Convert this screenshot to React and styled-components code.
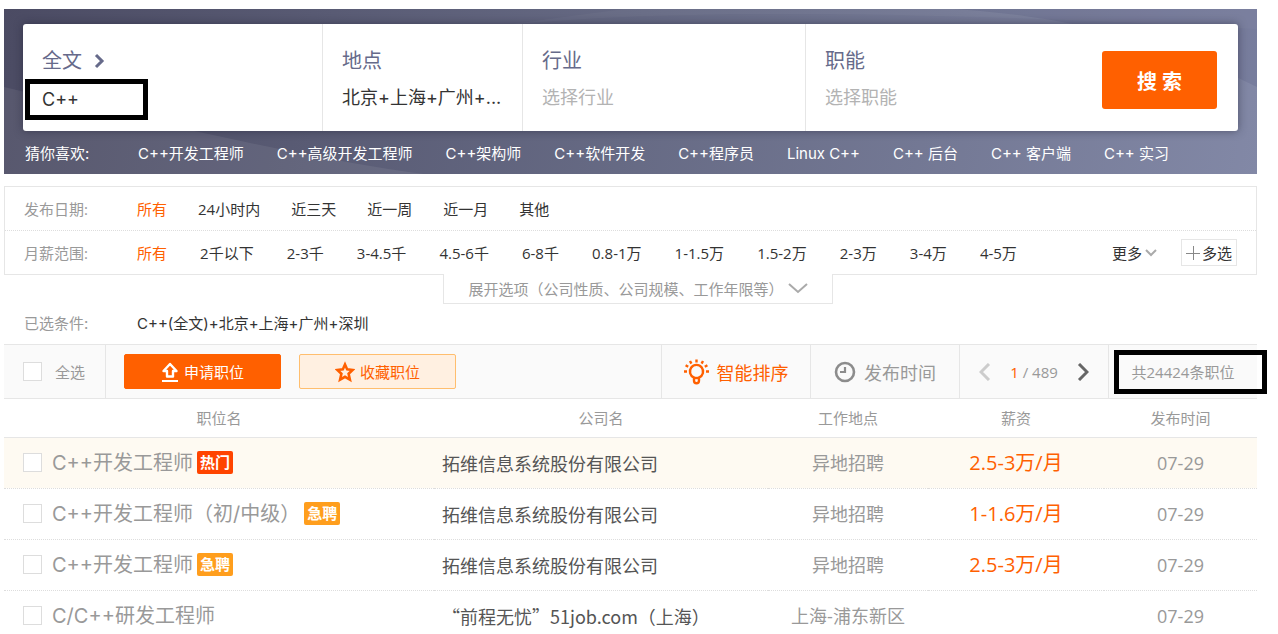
import React from "react";
import styled, { createGlobalStyle } from "styled-components";

const GlobalStyle = createGlobalStyle`
  * {
    box-sizing: border-box;
  }

  body {
    margin: 0;
    background: #fff;
    color: #333;
    font-family: "Open Sans", "Noto Sans CJK SC", sans-serif;
    font-size: 15px;
    line-height: 20px;
  }

  button,
  input {
    font-family: inherit;
    font-size: inherit;
    color: inherit;
    margin: 0;
  }

  button {
    padding: 0;
    border: 0;
    background: none;
    cursor: pointer;
  }

  a {
    color: inherit;
    text-decoration: none;
    white-space: nowrap;
  }
`;

const titleFont = `"Inter", "Noto Sans CJK SC", sans-serif`;

const Page = styled.main`
  padding: 9px 21px 0 4px;
`;

const Banner = styled.header`
  position: relative;
  padding: 15px 19px 0 19px;
  background: linear-gradient(100deg, #4b4b63 0%, #666a84 50%, #8288a6 100%);
`;

const BannerArt = styled.svg`
  position: absolute;
  top: 0;
  left: 0;
  width: 100%;
  height: 100%;
`;

const SearchCard = styled.form`
  position: relative;
  display: flex;
  height: 107px;
  border-radius: 3px;
  background: #fff;
  box-shadow: 0 0 8px rgba(30, 30, 50, 0.5);
`;

const SearchField = styled.div`
  flex: 1 1 ${(props) => props.$basis}px;
  min-width: 0;
  padding: 25px 19px 0;
  border-right: ${(props) => (props.$last ? "0" : "1px solid #e6e6e6")};
`;

const FieldTitle = styled.label`
  display: flex;
  align-items: center;
  gap: 12px;
  height: 24px;
  color: #666a8a;
  font-size: 20px;
  line-height: 24px;
`;

const FieldValue = styled.button`
  display: block;
  margin-top: 13px;
  color: ${(props) => (props.$empty ? "#b3b3b3" : "#333")};
  font-family: ${titleFont};
  font-size: 18px;
  line-height: 24px;
  white-space: nowrap;
`;

const KeywordInput = styled.input`
  display: block;
  width: 123px;
  height: 41px;
  margin: 6px 0 0 -17px;
  padding: 0 12px;
  border: 5px solid #000;
  background: #fff;
  font-family: ${titleFont};
  font-size: 18px;
  outline: 0;
`;

const SearchButton = styled.button`
  flex: none;
  width: 115px;
  height: 58px;
  margin: 27px 21px 0 0;
  border-radius: 3px;
  background: #ff6000;
  color: #fff;
  font-size: 20px;
  font-weight: 700;
`;

const Suggestions = styled.nav`
  position: relative;
  display: flex;
  height: 43px;
  padding: 2px 69px 0 2px;
  align-items: center;
  color: #fff;
  font-family: ${titleFont};
`;

const SuggestLabel = styled.span`
  flex: none;
  width: 113px;
`;

const SuggestLinks = styled.div`
  flex: 1;
  display: flex;
  justify-content: space-between;
`;

const Filters = styled.section`
  margin-top: 12px;
  border: 1px solid #e6e6e6;
`;

const FilterRow = styled.div`
  display: flex;
  align-items: center;
  height: 43px;
  padding: 0 19px;

  & + & {
    height: 44px;
    border-top: 1px dotted #ddd;
  }
`;

const FilterLabel = styled.span`
  flex: none;
  width: 113px;
  color: #999;
`;

const FilterOptions = styled.div`
  display: flex;
  flex: ${(props) => (props.$spread ? "1" : "none")};
  justify-content: space-between;
  gap: ${(props) => (props.$spread ? "0" : "31px")};
`;

const Option = styled.a`
  color: ${(props) => (props.$active ? "#ff6000" : "#333")};
`;

const MoreButton = styled.button`
  display: flex;
  align-items: center;
  gap: 3px;
  margin-left: 95px;
  white-space: nowrap;
`;

const MultiButton = styled.button`
  display: flex;
  align-items: center;
  justify-content: center;
  gap: 2px;
  width: 56px;
  height: 27px;
  margin-left: 24px;
  border: 1px solid #e6e6e6;
  white-space: nowrap;
`;

const ExpandButton = styled.button`
  display: flex;
  align-items: center;
  justify-content: center;
  gap: 4px;
  width: 390px;
  height: 30px;
  margin: -1px auto 0 439px;
  border: 1px solid #e6e6e6;
  border-top: 0;
  background: #fff;
  color: #999;
`;

const Selected = styled.div`
  display: flex;
  align-items: center;
  height: 40px;
  padding: 0 20px;
  font-family: ${titleFont};
`;

const Toolbar = styled.div`
  display: flex;
  height: 55px;
  border-top: 1px solid #e6e6e6;
  border-bottom: 1px solid #e6e6e6;
  background: #fafafa;
  color: #999;
`;

const CheckAll = styled.label`
  display: flex;
  align-items: center;
  gap: 13px;
  width: 102px;
  padding-left: 19px;
  border-right: 1px solid #e6e6e6;
`;

const Checkbox = styled.input.attrs({ type: "checkbox" })`
  appearance: none;
  flex: none;
  width: 19px;
  height: 19px;
  border: 1px solid #ddd;
  background: #fff;

  &:checked {
    background: #ff6000;
  }
`;

const Actions = styled.div`
  display: flex;
  flex: 1;
  align-items: center;
  gap: 18px;
  padding-left: 18px;
`;

const ActionButton = styled.button`
  display: flex;
  align-items: center;
  justify-content: center;
  gap: 5px;
  width: 157px;
  height: 35px;
  border: 1px solid ${(props) => (props.$primary ? "#ff6000" : "#ffbe6e")};
  border-radius: 2px;
  background: ${(props) => (props.$primary ? "#ff6000" : "#fff0e1")};
  color: ${(props) => (props.$primary ? "#fff" : "#ff6000")};
`;

const SortButton = styled.button`
  display: flex;
  align-items: center;
  justify-content: center;
  gap: 8px;
  width: 149px;
  border-left: 1px solid #e6e6e6;
  color: ${(props) => (props.$active ? "#ff6000" : "#999")};
  font-size: 18px;
`;

const Pager = styled.div`
  display: flex;
  align-items: center;
  justify-content: center;
  gap: 19px;
  width: 149px;
  border-left: 1px solid #e6e6e6;
  white-space: pre;

  button {
    display: flex;
  }

  b {
    color: #ff6000;
    font-weight: 400;
  }
`;

const Total = styled.div`
  position: relative;
  display: flex;
  align-items: center;
  justify-content: center;
  width: 149px;
  border-left: 1px solid #e6e6e6;

  &::after {
    content: "";
    position: absolute;
    top: 5px;
    right: -10px;
    bottom: 4px;
    left: 5px;
    border: 5px solid #000;
  }
`;

const JobTable = styled.table`
  width: 100%;
  border-collapse: collapse;
  table-layout: fixed;
`;

const HeadCell = styled.th`
  width: ${(props) => (props.$width ? `${props.$width}px` : "auto")};
  height: 38px;
  padding: 0;
  border-bottom: 1px solid #e6e6e6;
  color: #999;
  font-weight: 400;
`;

const JobRow = styled.tr`
  height: 51px;
  background: ${(props) => (props.$hot ? "#fefaf2" : "#fff")};
  border-bottom: ${(props) => (props.$last ? "0" : "1px dotted #ddd")};
`;

const Cell = styled.td`
  padding: 0;
  color: ${(props) => props.$color || "#999"};
  font-size: ${(props) => props.$size || 18}px;
  line-height: 26px;
  text-align: center;
  white-space: nowrap;
`;

const CompanyCell = styled(Cell)`
  padding-left: 8px;
  color: #555;
  font-family: "Noto Sans CJK SC", sans-serif;
  text-align: left;
`;

const JobName = styled.label`
  display: flex;
  align-items: center;
  padding-left: 19px;
  font-family: ${titleFont};
  font-size: 20px;

  ${Checkbox} {
    margin-right: 10px;
  }
`;

const Badge = styled.span`
  height: 23px;
  margin-left: 4px;
  padding: 0 3px;
  border-radius: 2px;
  background: ${(props) => (props.$hot ? "#ff4400" : "#ff9e1d")};
  color: #fff;
  font-size: 15px;
  font-weight: 700;
  line-height: 23px;
`;

const suggestions = [
  "C++开发工程师",
  "C++高级开发工程师",
  "C++架构师",
  "C++软件开发",
  "C++程序员",
  "Linux C++",
  "C++ 后台",
  "C++ 客户端",
  "C++ 实习",
];

const dates = ["所有", "24小时内", "近三天", "近一周", "近一月", "其他"];

const salaries = [
  "所有",
  "2千以下",
  "2-3千",
  "3-4.5千",
  "4.5-6千",
  "6-8千",
  "0.8-1万",
  "1-1.5万",
  "1.5-2万",
  "2-3万",
  "3-4万",
  "4-5万",
];

const jobs = [
  {
    name: "C++开发工程师",
    badge: "热门",
    company: "拓维信息系统股份有限公司",
    place: "异地招聘",
    salary: "2.5-3万/月",
    date: "07-29",
    hot: true,
  },
  {
    name: "C++开发工程师（初/中级）",
    badge: "急聘",
    company: "拓维信息系统股份有限公司",
    place: "异地招聘",
    salary: "1-1.6万/月",
    date: "07-29",
  },
  {
    name: "C++开发工程师",
    badge: "急聘",
    company: "拓维信息系统股份有限公司",
    place: "异地招聘",
    salary: "2.5-3万/月",
    date: "07-29",
  },
  {
    name: "C/C++研发工程师",
    company: "“前程无忧”51job.com（上海）",
    place: "上海-浦东新区",
    salary: "",
    date: "07-29",
  },
];

const Chevron = ({ width, height, points, color, stroke }) => (
  <svg width={width} height={height} fill="none" stroke={color} strokeWidth={stroke} aria-hidden="true">
    <polyline points={points} />
  </svg>
);

const ApplyIcon = () => (
  <svg width="18" height="22" viewBox="0 0 18 22" fill="none" stroke="#fff" strokeWidth="2" aria-hidden="true">
    <path d="M9 3 L15.5 10 H12 V15.5 H6 V10 H2.5 Z" strokeWidth="2.4" strokeLinejoin="round" />
    <path d="M1 20 H17" />
  </svg>
);

const StarIcon = () => (
  <svg width="20" height="22" viewBox="0 0 20 22" fill="none" stroke="#ff6000" strokeWidth="2.6" aria-hidden="true">
    <path d="M10 3.4 L12.2 8.4 L17.6 9 L13.6 12.8 L14.9 18.6 L10 15.8 L5.1 18.6 L6.4 12.8 L2.4 9 L7.8 8.4 Z" />
  </svg>
);

const BulbIcon = () => (
  <svg width="25" height="26" viewBox="0 0 25 26" fill="none" stroke="#ff6000" strokeWidth="2.4" aria-hidden="true">
    <path d="M10 18.6 A6.6 6.6 0 1 1 15 18.6 V21.5 A2.5 2.8 0 0 1 10 21.5 Z" />
    <path d="M10 19 H15" />
    <path d="M12.5 0.5 V3.5 M6 2 L7.4 4.6 M19 2 L17.6 4.6 M1.6 6.2 L4.2 7.7 M23.4 6.2 L20.8 7.7 M0 12.5 H3 M22 12.5 H25" />
  </svg>
);

const ClockIcon = () => (
  <svg width="22" height="22" viewBox="0 0 22 22" fill="none" stroke="#8c8c8c" aria-hidden="true">
    <circle cx="11" cy="11" r="9" strokeWidth="2.6" />
    <path d="M11 6 V11 H6" strokeWidth="2.2" />
  </svg>
);

const PlusIcon = () => (
  <svg width="14" height="14" stroke="#888" strokeWidth="1" aria-hidden="true">
    <path d="M0 7.5 H14 M7.5 0 V14" />
  </svg>
);

const SearchBanner = () => (
  <Banner>
    <BannerArt viewBox="0 0 1253 165" preserveAspectRatio="none" aria-hidden="true">
      <path d="M0 78 Q300 150 420 165 H0 Z" fill="#fff" fillOpacity="0.07" />
      <path d="M470 20 Q700 -10 1253 20 V0 H620 Z" fill="#fff" fillOpacity="0.03" />
      <path d="M950 0 Q1120 10 1253 78 V0 Z" fill="#2a2a55" fillOpacity="0.1" />
    </BannerArt>
    <SearchCard onSubmit={(e) => e.preventDefault()}>
      <SearchField $basis={300}>
        <FieldTitle htmlFor="keyword">
          全文
          <Chevron width={12} height={16} points="2,2 8,8 2,14" color="#666a8a" stroke={3} />
        </FieldTitle>
        <KeywordInput id="keyword" defaultValue="C++" />
      </SearchField>
      <SearchField $basis={200}>
        <FieldTitle htmlFor="area">地点</FieldTitle>
        <FieldValue id="area" type="button">
          北京+上海+广州+...
        </FieldValue>
      </SearchField>
      <SearchField $basis={283}>
        <FieldTitle htmlFor="industry">行业</FieldTitle>
        <FieldValue id="industry" type="button" $empty>
          选择行业
        </FieldValue>
      </SearchField>
      <SearchField $basis={296} $last>
        <FieldTitle htmlFor="position">职能</FieldTitle>
        <FieldValue id="position" type="button" $empty>
          选择职能
        </FieldValue>
      </SearchField>
      <SearchButton type="submit">搜 索</SearchButton>
    </SearchCard>
    <Suggestions>
      <SuggestLabel>猜你喜欢:</SuggestLabel>
      <SuggestLinks>
        {suggestions.map((text) => (
          <a href="#" key={text}>
            {text}
          </a>
        ))}
      </SuggestLinks>
    </Suggestions>
  </Banner>
);

const App = () => {
  return (
    <Page>
      <GlobalStyle />
      <SearchBanner />
      <Filters>
        <FilterRow>
          <FilterLabel>发布日期:</FilterLabel>
          <FilterOptions>
            {dates.map((text, i) => (
              <Option href="#" key={text} $active={i === 0}>
                {text}
              </Option>
            ))}
          </FilterOptions>
        </FilterRow>
        <FilterRow>
          <FilterLabel>月薪范围:</FilterLabel>
          <FilterOptions $spread>
            {salaries.map((text, i) => (
              <Option href="#" key={text} $active={i === 0}>
                {text}
              </Option>
            ))}
          </FilterOptions>
          <MoreButton type="button">
            更多
            <Chevron width={12} height={8} points="1,1 6,6 11,1" color="#aaa" stroke={2} />
          </MoreButton>
          <MultiButton type="button">
            <PlusIcon />
            多选
          </MultiButton>
        </FilterRow>
      </Filters>
      <ExpandButton type="button">
        展开选项（公司性质、公司规模、工作年限等）
        <Chevron width={20} height={11} points="1,1 10,9 19,1" color="#aaa" stroke={2} />
      </ExpandButton>
      <Selected>
        <FilterLabel>已选条件:</FilterLabel>
        <span>C++(全文)+北京+上海+广州+深圳</span>
      </Selected>
      <Toolbar>
        <CheckAll>
          <Checkbox />
          全选
        </CheckAll>
        <Actions>
          <ActionButton type="button" $primary>
            <ApplyIcon />
            申请职位
          </ActionButton>
          <ActionButton type="button">
            <StarIcon />
            收藏职位
          </ActionButton>
        </Actions>
        <SortButton type="button" $active>
          <BulbIcon />
          智能排序
        </SortButton>
        <SortButton type="button">
          <ClockIcon />
          发布时间
        </SortButton>
        <Pager>
          <button type="button" aria-label="上一页">
            <Chevron width={12} height={18} points="10,1 2,9 10,17" color="#ccc" stroke={3} />
          </button>
          <span>
            <b>1</b> / 489
          </span>
          <button type="button" aria-label="下一页">
            <Chevron width={12} height={18} points="2,1 10,9 2,17" color="#666" stroke={3} />
          </button>
        </Pager>
        <Total>共24424条职位</Total>
      </Toolbar>
      <JobTable>
        <thead>
          <tr>
            <HeadCell>职位名</HeadCell>
            <HeadCell $width={334}>公司名</HeadCell>
            <HeadCell $width={160}>工作地点</HeadCell>
            <HeadCell $width={176}>薪资</HeadCell>
            <HeadCell $width={153}>发布时间</HeadCell>
          </tr>
        </thead>
        <tbody>
          {jobs.map((job, i) => (
            <JobRow key={i} $hot={job.hot} $last={i === jobs.length - 1}>
              <Cell>
                <JobName>
                  <Checkbox />
                  {job.name}
                  {job.badge && <Badge $hot={job.hot}>{job.badge}</Badge>}
                </JobName>
              </Cell>
              <CompanyCell>{job.company}</CompanyCell>
              <Cell>{job.place}</Cell>
              <Cell $color="#ff6000" $size={20}>
                {job.salary}
              </Cell>
              <Cell>{job.date}</Cell>
            </JobRow>
          ))}
        </tbody>
      </JobTable>
    </Page>
  );
};

export default App;
